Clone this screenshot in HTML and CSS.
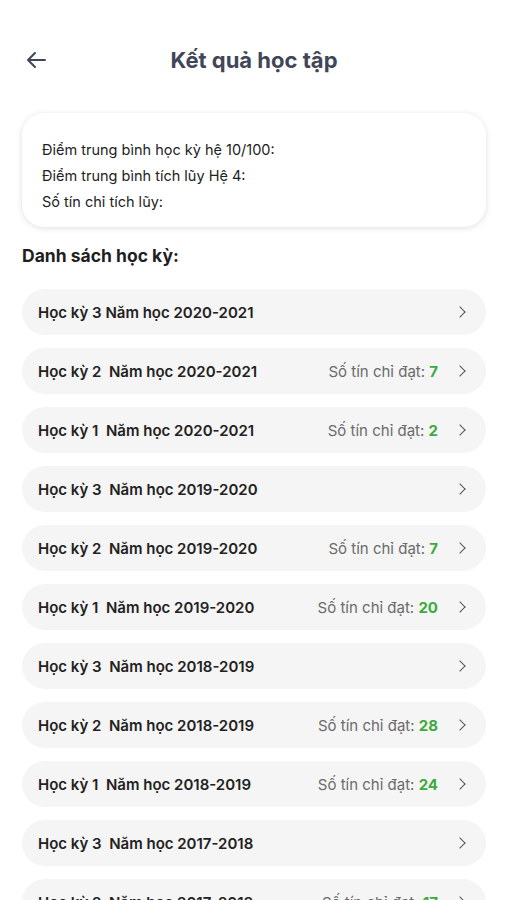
FILE: index.html
```
<!DOCTYPE html>
<html lang="vi">
<head>
<meta charset="utf-8">
<link rel="stylesheet" href="styles.css">
</head>
<body>
<div class="page">
  <header class="header">
    <svg class="back" width="22" height="18" viewBox="0 0 22 18"><path d="M20 9H3M10 2L3 9l7 7" fill="none" stroke="#3f4657" stroke-width="2" stroke-linecap="round" stroke-linejoin="round"/></svg>
    <h1 class="title">Kết quả học tập</h1>
  </header>
  <section class="card">
    <p>Điểm trung bình học kỳ hệ 10/100:</p>
    <p>Điểm trung bình tích lũy Hệ 4:</p>
    <p>Số tín chỉ tích lũy:</p>
  </section>
  <h2 class="section-title">Danh sách học kỳ:</h2>
  <ul class="list">
    <li class="row"><span class="name">Học kỳ 3 Năm học 2020-2021</span><span class="credits"></span><span class="chev"></span></li>
    <li class="row"><span class="name">Học kỳ 2  Năm học 2020-2021</span><span class="credits">Số tín chỉ đạt: <b>7</b></span><span class="chev"></span></li>
    <li class="row"><span class="name">Học kỳ 1  Năm học 2020-2021</span><span class="credits">Số tín chỉ đạt: <b>2</b></span><span class="chev"></span></li>
    <li class="row"><span class="name">Học kỳ 3  Năm học 2019-2020</span><span class="credits"></span><span class="chev"></span></li>
    <li class="row"><span class="name">Học kỳ 2  Năm học 2019-2020</span><span class="credits">Số tín chỉ đạt: <b>7</b></span><span class="chev"></span></li>
    <li class="row"><span class="name">Học kỳ 1  Năm học 2019-2020</span><span class="credits">Số tín chỉ đạt: <b>20</b></span><span class="chev"></span></li>
    <li class="row"><span class="name">Học kỳ 3  Năm học 2018-2019</span><span class="credits"></span><span class="chev"></span></li>
    <li class="row"><span class="name">Học kỳ 2  Năm học 2018-2019</span><span class="credits">Số tín chỉ đạt: <b>28</b></span><span class="chev"></span></li>
    <li class="row"><span class="name">Học kỳ 1  Năm học 2018-2019</span><span class="credits">Số tín chỉ đạt: <b>24</b></span><span class="chev"></span></li>
    <li class="row"><span class="name">Học kỳ 3  Năm học 2017-2018</span><span class="credits"></span><span class="chev"></span></li>
    <li class="row"><span class="name">Học kỳ 2  Năm học 2017-2018</span><span class="credits">Số tín chỉ đạt: <b>17</b></span><span class="chev"></span></li>
  </ul>
</div>
</body>
</html>
```
FILE: styles.css
```
* { box-sizing: border-box; }
html, body { margin: 0; padding: 0; background: #fff; }
body { font-family: Inter, "Noto Sans", sans-serif; color: #222; height: 900px; overflow: hidden; }
.page { padding: 0 21px 0 22px; }
.header { position: relative; height: 120px; padding-top: 44px; display: flex; justify-content: center; }
.back { position: absolute; left: 3px; top: 51px; }
.title { margin: 0; font-size: 22px; font-weight: 700; color: #3f4657; line-height: 32px; }
.card { margin-top: -7px; height: 114px; border-radius: 22px; background: #fff; box-shadow: 0 1px 6px rgba(0,0,0,0.13); padding: 24px 20px 0; }
.card p { margin: 0; font-size: 14.5px; line-height: 26px; color: #222; }
.section-title { margin: 16px 0 20px; font-size: 17.5px; font-weight: 700; line-height: 26px; color: #1f1f1f; }
.list { list-style: none; margin: 0; padding: 0; display: flex; flex-direction: column; gap: 13px; }
.row { height: 46px; border-radius: 23px; background: #f5f5f5; display: flex; align-items: center; padding: 0 20px 0 16px; font-size: 15px; }
.name { white-space: pre; font-weight: 600; color: #222; flex: 1; }
.credits { color: #6b6b6b; margin-right: 18px; }
.credits b { color: #3daa3d; font-weight: 700; }
.chev { width: 8px; height: 8px; border-top: 1.6px solid #555; border-right: 1.6px solid #555; transform: rotate(45deg); margin-right: 2px; }
```
